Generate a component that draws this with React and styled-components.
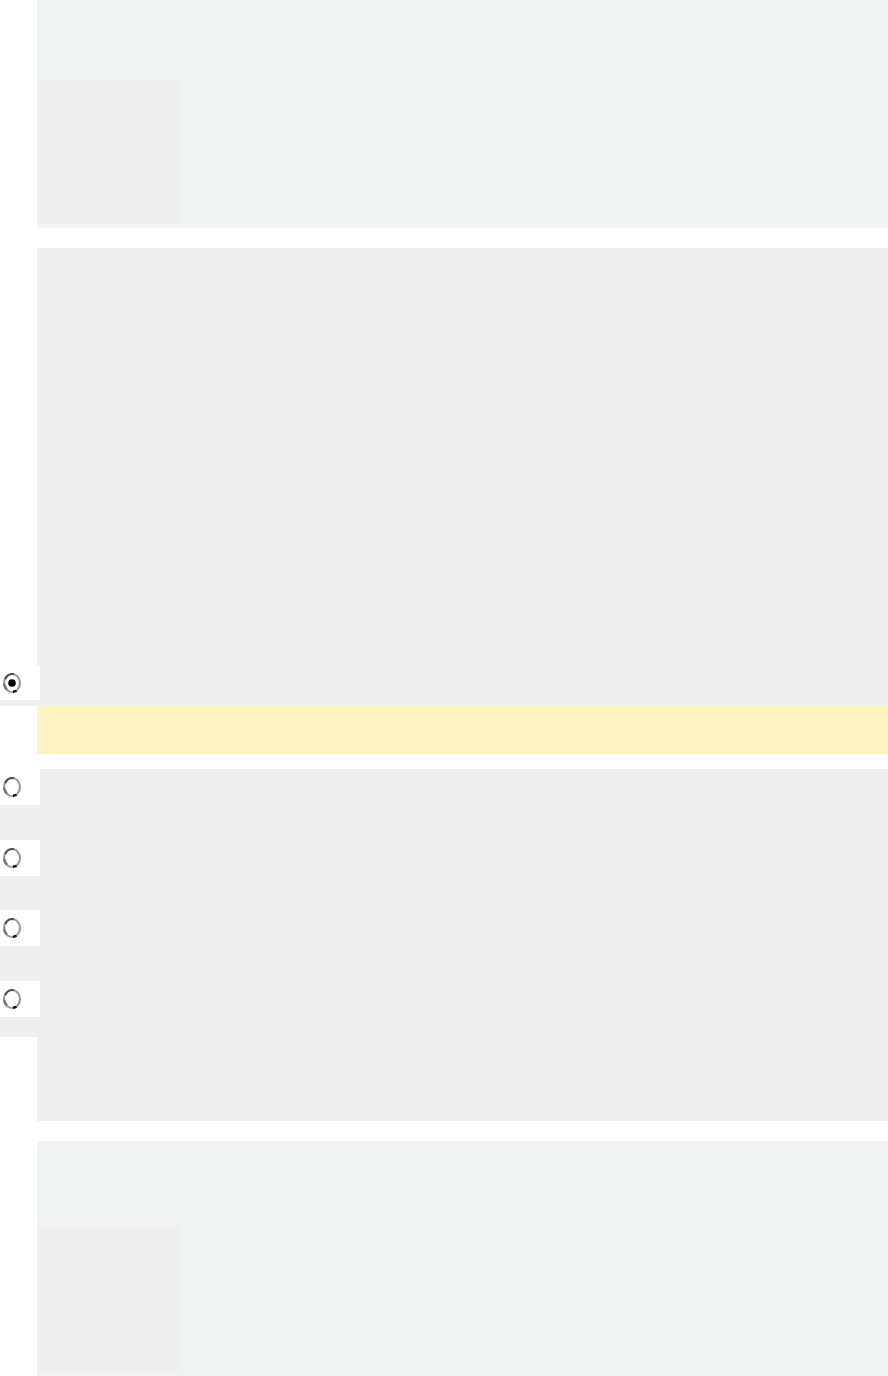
import React from 'react';
import styled, { createGlobalStyle } from 'styled-components';

const GlobalStyle = createGlobalStyle`
  html, body {
    margin: 0;
    padding: 0;
    background: #ffffff;
    font-family: "Liberation Sans", Arial, sans-serif;
    overflow: hidden;
  }
`;

const Page = styled.div`
  display: flex;
  flex-direction: column;
  gap: 20px;
  padding-left: 37px;
  width: 888px;
  box-sizing: border-box;
`;

const MediaCard = styled.div`
  display: flex;
  flex-direction: column;
  justify-content: flex-end;
  height: ${(props) => props.height}px;
  padding-bottom: ${(props) => props.bottom}px;
  box-sizing: border-box;
  background-color: #eff3f4;
`;

const Thumb = styled.div`
  width: 144px;
  height: 144px;
  background-color: #efefef;
`;

const Quiz = styled.div`
  display: flex;
  flex-direction: column;
`;

const Skeleton = styled.div`
  height: ${(props) => props.height}px;
  background-color: ${(props) => props.color || '#eeeff1'};
`;

const Bleed = styled.div`
  margin-left: -37px;
  background-color: #eeeff1;
`;

const OptionList = styled(Bleed)`
  display: flex;
  flex-direction: column;
  gap: ${(props) => props.gap || 0}px;
  padding-bottom: ${(props) => props.bottom || 0}px;
`;

const RadioBox = styled.label`
  display: flex;
  align-items: center;
  width: 40px;
  height: ${(props) => props.height || 36}px;
  padding-left: 2px;
  box-sizing: border-box;
  background-color: #ffffff;
`;

const Spacer = styled.div`
  height: ${(props) => props.height}px;
  margin-left: -37px;
  background-color: #ffffff;
`;

const Radio = ({ checked }) => (
  <svg width="20" height="22" viewBox="0 0 20 22">
    <ellipse cx="10" cy="11" rx="8" ry="9" fill="#ffffff" stroke="#9a9a9a" strokeWidth="2.2" />
    <path d="M3.2 7 A8 9 0 0 1 12 2.2" fill="none" stroke="#4e4e4e" strokeWidth="2.2" />
    <path d="M2.2 12 A8 9 0 0 0 5 17.5" fill="none" stroke="#6c6c6c" strokeWidth="2" />
    <path d="M11 19.8 A8 9 0 0 0 14.5 18.8" fill="none" stroke="#111" strokeWidth="2.4" />
    {checked && <circle cx="10" cy="11" r="3.8" fill="#000000" />}
  </svg>
);

const options = [1, 2, 3, 4];

const App = () => (
  <>
    <GlobalStyle />
    <Page>
      <MediaCard height={228} bottom={4}>
        <Thumb />
      </MediaCard>

      <Quiz>
        <Skeleton height={417} />
        <OptionList bottom={6}>
          <RadioBox height={35}>
            <Radio checked />
          </RadioBox>
        </OptionList>
        <Skeleton height={48} color="#fef3c2" />
        <Spacer height={15} />
        <OptionList gap={34.5} bottom={20}>
          {options.map((o) => (
            <RadioBox key={o}>
              <Radio />
            </RadioBox>
          ))}
        </OptionList>
        <Skeleton height={84} />
      </Quiz>

      <MediaCard height={240} bottom={11}>
        <Thumb />
      </MediaCard>
    </Page>
  </>
);

export default App;
